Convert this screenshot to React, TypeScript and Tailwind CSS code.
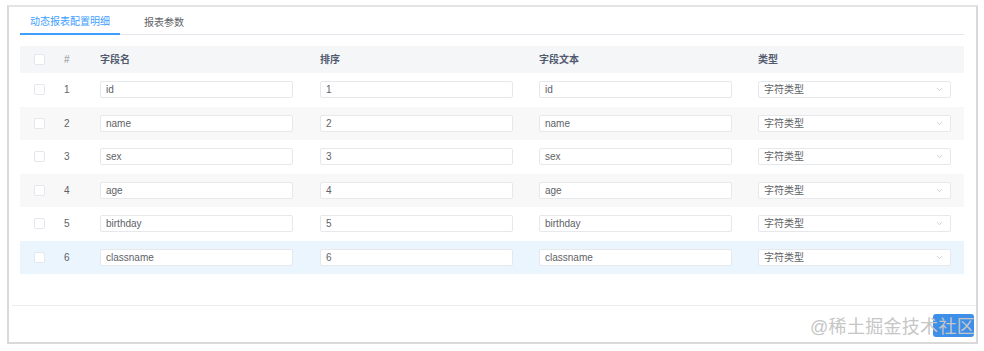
import React, { useState } from 'react';
import { ChevronDown } from 'lucide-react';

const rows = [
  { id: 1, name: 'id', text: 'id' },
  { id: 2, name: 'name', text: 'name' },
  { id: 3, name: 'sex', text: 'sex' },
  { id: 4, name: 'age', text: 'age' },
  { id: 5, name: 'birthday', text: 'birthday' },
  { id: 6, name: 'classname', text: 'classname' },
];

const cols = 'grid grid-cols-[34px_36px_220px_219px_219px_216px]';

const Checkbox = () => (
  <span className="block w-[11px] h-[11px] rounded-[2px] border border-[#e4e7ed] bg-white" />
);

const Field = ({ value }: { value: string | number }) => (
  <div className="w-[193px] h-[17px] rounded-[2px] border border-[#e6e8ec] bg-white pl-[5px] flex items-center text-[10px] text-[#606266]">
    {value}
  </div>
);

const App = () => {
  const [tab, setTab] = useState(0);
  const hover = 6;

  return (
    <div
      className="w-[984px] h-[351px] bg-white pl-[7px] pt-[5px]"
      style={{ fontFamily: '"Liberation Sans", "Noto Sans CJK SC", sans-serif' }}
    >
      <div className="w-[971px] h-[339px] border-2 border-[#d9d9d9] border-t-[#e3e3e3] flex flex-col">
        {/* Tabs */}
        <div className="ml-[11px] w-[944px] h-[28px] flex border-b border-[#e4e7ed] text-[10px]">
          {['动态报表配置明细', '报表参数'].map((t, i) => (
            <button
              key={t}
              onClick={() => setTab(i)}
              className={`h-[28px] pt-[2px] flex items-center justify-center ${
                i === 0 ? 'w-[100px]' : 'w-[88px]'
              } ${
                tab === i
                  ? 'text-[#409eff] border-b-2 border-[#409eff] -mb-px'
                  : 'text-[#606266]'
              }`}
            >
              {t}
            </button>
          ))}
        </div>

        {/* Table */}
        <div className="ml-[11px] mt-[11px] w-[944px] text-[10px]">
          <div className={`${cols} h-[27px] items-center bg-[#f5f6f8] font-bold text-[#515a6e]`}>
            <div className="pl-[14px]"><Checkbox /></div>
            <div className="pl-[10px] font-normal text-[#909399]">#</div>
            <div className="pl-[10px]">字段名</div>
            <div className="pl-[10px]">排序</div>
            <div className="pl-[10px]">字段文本</div>
            <div className="pl-[10px]">类型</div>
          </div>
          {rows.map((r) => (
            <div
              key={r.id}
              className={`${cols} h-[33.5px] items-center text-[#606266] ${
                r.id === hover ? 'bg-[#ebf5fe]' : r.id % 2 === 0 ? 'bg-[#f8f8f9]' : 'bg-white'
              }`}
            >
              <div className="pl-[14px]"><Checkbox /></div>
              <div className="pl-[10px]">{r.id}</div>
              <div className="pl-[10px]"><Field value={r.name} /></div>
              <div className="pl-[10px]"><Field value={r.id} /></div>
              <div className="pl-[10px]"><Field value={r.text} /></div>
              <div className="pl-[10px]">
                <div className="w-[193px] h-[17px] rounded-[2px] border border-[#e6e8ec] bg-white pl-[5px] pr-[6px] flex items-center justify-between text-[#606266]">
                  <span>字符类型</span>
                  <ChevronDown size={9} strokeWidth={1.5} className="text-[#a8abb2]" />
                </div>
              </div>
            </div>
          ))}
        </div>

        {/* Footer */}
        <div className="mt-auto ml-[3px] h-[37px] border-t border-[#ececec] relative flex items-start justify-end pr-[2px]">
          <button
            aria-label="确定"
            className="w-[41px] h-[23px] mt-[8px] rounded-[3px] bg-[#3d8fe8]"
          />
          <span className="absolute right-[1px] top-[11px] text-[18px] leading-[20px] text-[#c6c6c6] tracking-[0.3px] pointer-events-none">
            @稀土掘金技术社区
          </span>
        </div>
      </div>
    </div>
  );
};

export default App;
